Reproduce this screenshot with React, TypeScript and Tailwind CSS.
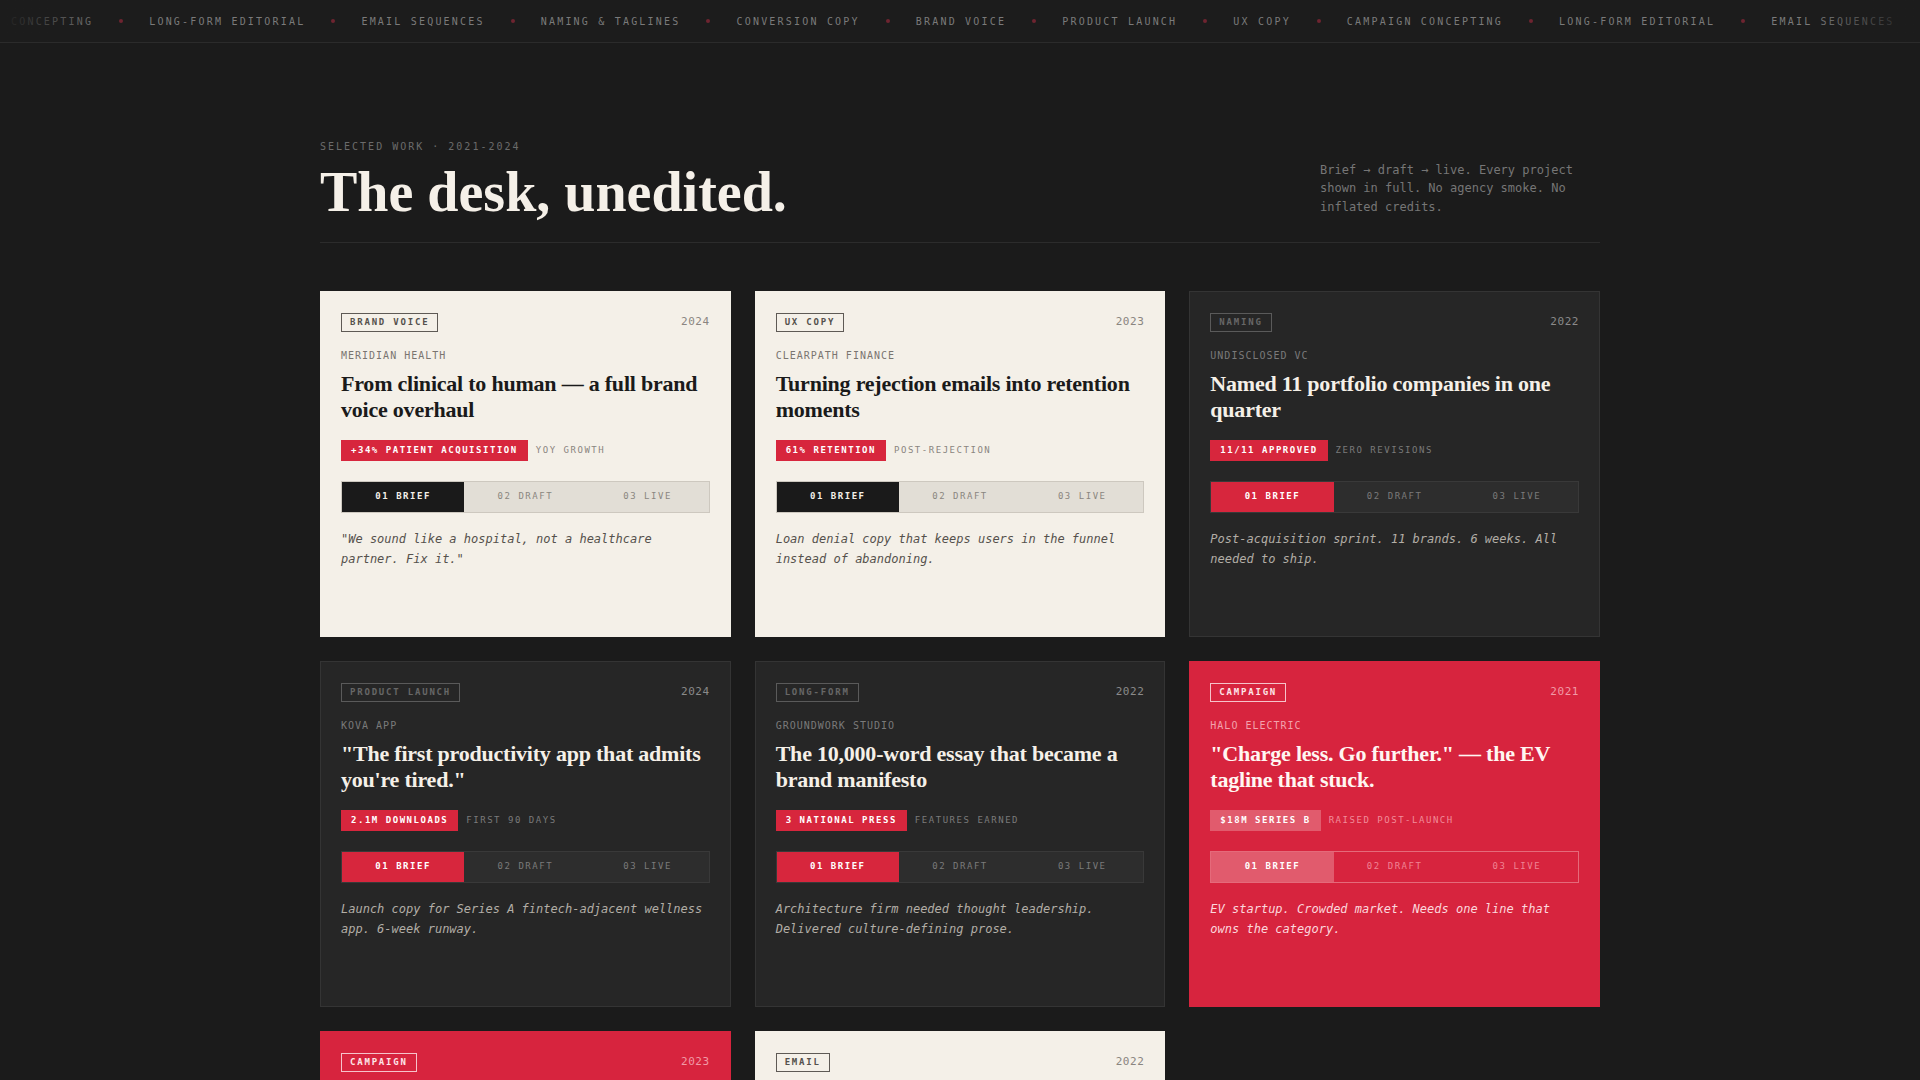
import React from "react"

const mono = "font-['DejaVu_Sans_Mono','Liberation_Mono',monospace]"
const serif = "font-['Liberation_Serif','Times_New_Roman',serif]"

type Tone = "cream" | "dark" | "red"

interface Project {
  tone: Tone
  tag: string
  year: string
  client: string
  title: string
  metric: string
  metricNote: string
  brief: string
}

const projects: Project[] = [
  {
    tone: "cream",
    tag: "BRAND VOICE",
    year: "2024",
    client: "MERIDIAN HEALTH",
    title: "From clinical to human — a full brand voice overhaul",
    metric: "+34% PATIENT ACQUISITION",
    metricNote: "YOY GROWTH",
    brief: '"We sound like a hospital, not a healthcare partner. Fix it."',
  },
  {
    tone: "cream",
    tag: "UX COPY",
    year: "2023",
    client: "CLEARPATH FINANCE",
    title: "Turning rejection emails into retention moments",
    metric: "61% RETENTION",
    metricNote: "POST-REJECTION",
    brief: "Loan denial copy that keeps users in the funnel instead of abandoning.",
  },
  {
    tone: "dark",
    tag: "NAMING",
    year: "2022",
    client: "UNDISCLOSED VC",
    title: "Named 11 portfolio companies in one quarter",
    metric: "11/11 APPROVED",
    metricNote: "ZERO REVISIONS",
    brief: "Post-acquisition sprint. 11 brands. 6 weeks. All needed to ship.",
  },
  {
    tone: "dark",
    tag: "PRODUCT LAUNCH",
    year: "2024",
    client: "KOVA APP",
    title: '"The first productivity app that admits you\'re tired."',
    metric: "2.1M DOWNLOADS",
    metricNote: "FIRST 90 DAYS",
    brief: "Launch copy for Series A fintech-adjacent wellness app. 6-week runway.",
  },
  {
    tone: "dark",
    tag: "LONG-FORM",
    year: "2022",
    client: "GROUNDWORK STUDIO",
    title: "The 10,000-word essay that became a brand manifesto",
    metric: "3 NATIONAL PRESS",
    metricNote: "FEATURES EARNED",
    brief: "Architecture firm needed thought leadership. Delivered culture-defining prose.",
  },
  {
    tone: "red",
    tag: "CAMPAIGN",
    year: "2021",
    client: "HALO ELECTRIC",
    title: '"Charge less. Go further." — the EV tagline that stuck.',
    metric: "$18M SERIES B",
    metricNote: "RAISED POST-LAUNCH",
    brief: "EV startup. Crowded market. Needs one line that owns the category.",
  },
  {
    tone: "red",
    tag: "CAMPAIGN",
    year: "2023",
    client: "NORTHLINE COFFEE",
    title: "A city-wide poster run that sold out a roastery",
    metric: "4X FOOT TRAFFIC",
    metricNote: "LAUNCH WEEKEND",
    brief: "Local roaster, zero ad budget. Needed a reason to cross town.",
  },
  {
    tone: "cream",
    tag: "EMAIL",
    year: "2022",
    client: "FIELDNOTE SUPPLY",
    title: "A five-part welcome series people actually finish",
    metric: "48% OPEN RATE",
    metricNote: "ALL FIVE SENDS",
    brief: "New subscribers were bouncing after one email. Make them stay.",
  },
]

const tones = {
  cream: {
    card: "bg-[#f4f0e8] border-[#f4f0e8]",
    tag: "border-[#5e5a55] text-[#55514c]",
    year: "text-[#8a8580]",
    client: "text-[#7a7570]",
    title: "text-[#1a1a1a]",
    metric: "bg-[#d7263d] text-white",
    note: "text-[#8a8580]",
    tabs: "bg-[#e2ded6] border-[#cdc8bf]",
    active: "bg-[#1a1a1a] text-[#f4f0e8]",
    idle: "text-[#8a8680]",
    brief: "text-[#55514c]",
  },
  dark: {
    card: "bg-[#262626] border-[#343434]",
    tag: "border-[#5a5a5a] text-[#676767]",
    year: "text-[#8a8a8a]",
    client: "text-[#7a7a7a]",
    title: "text-[#f5f0e8]",
    metric: "bg-[#d7263d] text-white",
    note: "text-[#7a7a7a]",
    tabs: "bg-[#2d2d2d] border-[#393939]",
    active: "bg-[#d7263d] text-white",
    idle: "text-[#7a7a7a]",
    brief: "text-[#b3aea6]",
  },
  red: {
    card: "bg-[#d7243e] border-[#d7243e]",
    tag: "border-[#f6c3ca] text-[#fde6e9]",
    year: "text-[#f19aa6]",
    client: "text-[#f3a2ad]",
    title: "text-[#fff6f2]",
    metric: "bg-[#e15b6d] text-white",
    note: "text-[#f28c9a]",
    tabs: "bg-[#d7243e] border-[#e56a7a]",
    active: "bg-[#e15b6d] text-white",
    idle: "text-[#f08393]",
    brief: "text-[#fcd8dd]",
  },
}

const services = [
  "CAMPAIGN CONCEPTING",
  "LONG-FORM EDITORIAL",
  "EMAIL SEQUENCES",
  "NAMING & TAGLINES",
  "CONVERSION COPY",
  "BRAND VOICE",
  "PRODUCT LAUNCH",
  "UX COPY",
  "CAMPAIGN CONCEPTING",
  "LONG-FORM EDITORIAL",
  "EMAIL SEQUENCES",
  "NAMING & TAGLINES",
]

function Ticker() {
  return (
    <div className="relative h-[43px] overflow-hidden border-b border-[#2b2b2b] bg-[#1c1c1c]">
      <div className={`flex h-full items-center gap-[26px] whitespace-nowrap -ml-[63px] ${mono} text-[10px] tracking-[0.22em] text-[#7a7a7a]`}>
        {services.map((s, i) => (
          <React.Fragment key={i}>
            <span>{s}</span>
            <span className="h-1 w-1 shrink-0 rounded-full bg-[#6e2430]" />
          </React.Fragment>
        ))}
      </div>
      {/* edge fades */}
      <div className="pointer-events-none absolute inset-y-0 left-0 w-[110px] bg-linear-to-r from-[#1c1c1c] to-transparent" />
      <div className="pointer-events-none absolute inset-y-0 right-0 w-[110px] bg-linear-to-l from-[#1c1c1c] to-transparent" />
    </div>
  )
}

function Card({ p }: { p: Project }) {
  const t = tones[p.tone]
  return (
    <article className={`flex min-h-[346px] flex-col border px-5 pb-5 pt-[21px] ${t.card}`}>
      <div className="flex items-center justify-between">
        <span className={`border-[1.5px] px-2 font-bold leading-[17px] ${mono} text-[9px] tracking-[0.2em] ${t.tag}`}>
          {p.tag}
        </span>
        <span className={`${mono} text-[11px] tracking-[0.05em] ${t.year}`}>{p.year}</span>
      </div>

      <p className={`mt-4 ${mono} text-[10px] leading-[15px] tracking-[0.1em] ${t.client}`}>{p.client}</p>

      <h3 className={`mt-2 ${serif} text-[22px] font-bold leading-[1.2] tracking-[-0.01em] ${t.title}`}>
        {p.title}
      </h3>

      <div className={`mt-4 flex items-center gap-2 ${mono} text-[9px] tracking-[0.17em]`}>
        <span className={`px-2.5 font-bold leading-[21px] ${t.metric}`}>{p.metric}</span>
        <span className={t.note}>{p.metricNote}</span>
      </div>

      <div className={`mt-5 grid h-8 grid-cols-3 border ${mono} text-[9px] tracking-[0.17em] ${t.tabs}`}>
        <span className={`flex items-center justify-center font-bold ${t.active}`}>01 BRIEF</span>
        <span className={`flex items-center justify-center ${t.idle}`}>02 DRAFT</span>
        <span className={`flex items-center justify-center ${t.idle}`}>03 LIVE</span>
      </div>

      <p className={`mt-4 ${mono} text-[12px] italic leading-[20px] ${t.brief}`}>{p.brief}</p>
    </article>
  )
}

export default function App() {
  return (
    <div className="min-h-screen bg-[#1b1b1b]">
      <Ticker />

      <main className="mx-auto max-w-[1280px] pt-24 pb-24">
        {/* Header */}
        <header className="flex items-end justify-between border-b border-[#2c2c2c] pb-[22px]">
          <div>
            <p className={`${mono} text-[10px] leading-[15px] tracking-[0.2em] text-[#6b6b6b]`}>
              SELECTED WORK · 2021-2024
            </p>
            <h1 className={`mt-2.5 ${serif} text-[56px] font-bold leading-none text-[#f5f0e8]`}>
              The desk, unedited.
            </h1>
          </div>
          <p className={`mb-[3px] w-[280px] ${mono} text-[12px] leading-[18.8px] text-[#767676]`}>
            Brief → draft → live. Every project shown in full. No agency smoke. No inflated credits.
          </p>
        </header>

        {/* Grid */}
        <section className="mt-12 grid grid-cols-3 gap-6">
          {projects.map((p, i) => (
            <Card key={i} p={p} />
          ))}
        </section>
      </main>
    </div>
  )
}
